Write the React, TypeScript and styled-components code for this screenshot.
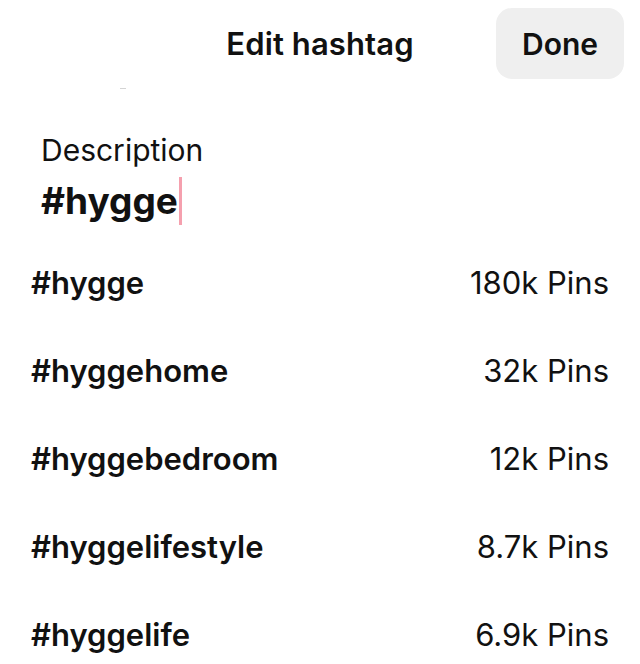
import { FC } from "react";
import { createGlobalStyle, styled } from "styled-components";

const GlobalStyle = createGlobalStyle`
  html, body {
    margin: 0;
    padding: 0;
    background: #ffffff;
  }
  body {
    font-family: Inter, "Noto Sans", "Liberation Sans", sans-serif;
    color: #111111;
    -webkit-font-smoothing: antialiased;
  }
`;

interface Suggestion {
  tag: string;
  pins: string;
}

const suggestions: Suggestion[] = [
  { tag: "#hygge", pins: "180k Pins" },
  { tag: "#hyggehome", pins: "32k Pins" },
  { tag: "#hyggebedroom", pins: "12k Pins" },
  { tag: "#hyggelifestyle", pins: "8.7k Pins" },
  { tag: "#hyggelife", pins: "6.9k Pins" },
];

const App: FC = () => {
  return (
    <>
      <GlobalStyle />
      <StyledScreen>
        <StyledHeader>
          <StyledTitle>Edit hashtag</StyledTitle>
          <StyledDoneButton>Done</StyledDoneButton>
          <StyledScrollMark />
        </StyledHeader>
        <StyledField>
          <StyledLabel>Description</StyledLabel>
          <StyledInput>
            #hygge
            <StyledCaret />
          </StyledInput>
        </StyledField>
        <StyledList>
          {suggestions.map((suggestion) => (
            <StyledRow key={suggestion.tag}>
              <StyledTag>{suggestion.tag}</StyledTag>
              <StyledPins>{suggestion.pins}</StyledPins>
            </StyledRow>
          ))}
        </StyledList>
      </StyledScreen>
    </>
  );
};

export default App;

const StyledScreen = styled.div`
  width: 640px;
  height: 664px;
  overflow: hidden;
  background: #ffffff;
`;

const StyledHeader = styled.div`
  position: relative;
  height: 87px;
  display: flex;
  align-items: center;
  justify-content: center;
  background: #ffffff;
`;

const StyledTitle = styled.div`
  font-size: 31px;
  font-weight: 600;
  letter-spacing: 0.1px;
`;

const StyledDoneButton = styled.button`
  position: absolute;
  top: 8px;
  right: 16px;
  width: 128px;
  height: 71px;
  border: none;
  border-radius: 16px;
  background: #efefef;
  font-family: inherit;
  font-size: 30px;
  font-weight: 600;
  color: #111111;
  cursor: pointer;
`;

const StyledScrollMark = styled.span`
  position: absolute;
  left: 120px;
  top: 88px;
  width: 6px;
  height: 1px;
  background: #d4d4d4;
`;

const StyledField = styled.div`
  display: flex;
  flex-direction: column;
  padding: 44px 0 0 41px;
`;

const StyledLabel = styled.div`
  font-size: 30px;
  font-weight: 400;
  line-height: 38px;
`;

const StyledInput = styled.div`
  display: flex;
  align-items: center;
  margin-top: 8px;
  font-size: 37px;
  font-weight: 700;
  line-height: 48px;
`;

const StyledCaret = styled.span`
  display: inline-block;
  width: 3px;
  height: 48px;
  margin-left: 1px;
  background: #f5a0ae;
`;

const StyledList = styled.div`
  display: flex;
  flex-direction: column;
  padding: 13px 31px 0 31px;
`;

const StyledRow = styled.div`
  display: flex;
  align-items: center;
  justify-content: space-between;
  height: 88px;
`;

const StyledTag = styled.div`
  font-size: 31px;
  font-weight: 600;
`;

const StyledPins = styled.div`
  font-size: 31px;
  font-weight: 400;
`;
